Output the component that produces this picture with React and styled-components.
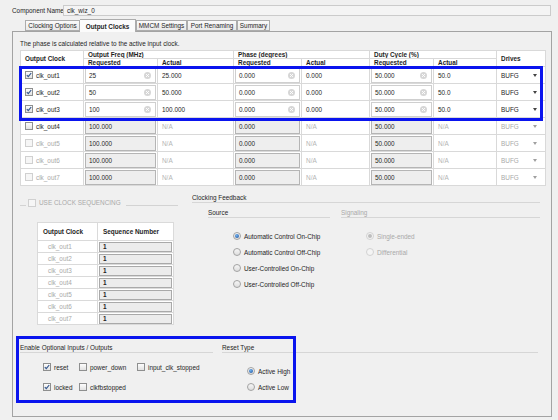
import React from "react";
import styled, { createGlobalStyle } from "styled-components";

const GlobalStyle = createGlobalStyle`
  html, body {
    margin: 0;
    padding: 0;
    background: #f0f0f0;
  }
  body {
    font-family: "Liberation Sans", Arial, sans-serif;
    font-size: 6.4px;
    color: #1e1e1e;
  }
`;

const BLUE = "#0a14ee";
const GRAY_TEXT = "#a9a9a9";

const clocks = [
  { name: "clk_out1", on: true, freq: "25", freqAct: "25.000" },
  { name: "clk_out2", on: true, freq: "50", freqAct: "50.000" },
  { name: "clk_out3", on: true, freq: "100", freqAct: "100.000" },
  { name: "clk_out4", on: false, can: true },
  { name: "clk_out5", on: false },
  { name: "clk_out6", on: false },
  { name: "clk_out7", on: false },
];

const tabs = [
  { label: "Clocking Options", w: 55 },
  { label: "Output Clocks", w: 56, active: true },
  { label: "MMCM Settings", w: 51 },
  { label: "Port Renaming", w: 50 },
  { label: "Summary", w: 33 },
];

// ---------- little widgets

const Box = styled.span`
  display: inline-flex;
  align-items: center;
  justify-content: center;
  flex: none;
  width: 8px;
  height: 8px;
  box-sizing: border-box;
  border: 1px solid ${(p) => (p.$disabled ? "#d0d0d0" : "#8e8f8f")};
  background: ${(p) =>
    p.$disabled ? "#f6f6f6" : "linear-gradient(#fdfdfd, #e2e2e2)"};
`;

const Check = ({ checked, disabled }) => (
  <Box $disabled={disabled}>
    {checked && (
      <svg width="6" height="6" viewBox="0 0 6 6">
        <path d="M0.8 3.1 L2.3 4.7 L5.2 1" fill="none" stroke="#35588f" strokeWidth="1.2" />
      </svg>
    )}
  </Box>
);

const RadioRing = styled.span`
  display: inline-flex;
  align-items: center;
  justify-content: center;
  flex: none;
  width: 8px;
  height: 8px;
  box-sizing: border-box;
  border-radius: 50%;
  border: 1px solid ${(p) => (p.$disabled ? "#d2d2d2" : "#a3a3a3")};
  background: ${(p) => (p.$disabled ? "#f4f4f4" : "linear-gradient(#f6f6f6, #dedede)")};
`;

const RadioDot = styled.span`
  width: 4px;
  height: 4px;
  border-radius: 50%;
  background: ${(p) => (p.$disabled ? "#bdbdbd" : "radial-gradient(circle at 40% 35%, #6fb0ec, #1a4f9c)")};
`;

const Radio = ({ checked, disabled }) => (
  <RadioRing $disabled={disabled}>{checked && <RadioDot $disabled={disabled} />}</RadioRing>
);

const ClearIcon = () => (
  <svg width="7" height="7" viewBox="0 0 7 7">
    <circle cx="3.5" cy="3.5" r="3.5" fill="#d6d6d6" />
    <path d="M2 2 L5 5 M5 2 L2 5" stroke="#fff" strokeWidth="0.9" />
  </svg>
);

const Arrow = ({ dim }) => (
  <svg width="4" height="3" viewBox="0 0 4 3">
    <path d="M0 0 H4 L2 3 Z" fill={dim ? "#a0a0a0" : "#444"} />
  </svg>
);

// ---------- top

const Page = styled.div`
  width: 558px;
  height: 420px;
  box-sizing: border-box;
  padding-top: 4px;
  overflow: hidden;
`;

const NameRow = styled.div`
  display: flex;
  align-items: center;
  height: 13px;
  padding: 0 7px 0 12px;
`;

const NameLabel = styled.span`
  width: 51px;
  flex: none;
  white-space: nowrap;
`;

const NameInput = styled.div`
  flex: 1;
  height: 11px;
  box-sizing: border-box;
  display: flex;
  align-items: center;
  padding-left: 3px;
  border: 1px solid #cbcbcb;
  background: #f4f4f4;
`;

const TabBar = styled.div`
  display: flex;
  align-items: flex-end;
  height: 12px;
  margin-top: 2px;
  padding-left: 25px;
  position: relative;
  z-index: 1;
`;

const Tab = styled.div`
  width: ${(p) => p.$w}px;
  height: ${(p) => (p.$active ? 13 : 11)}px;
  margin-bottom: ${(p) => (p.$active ? -1 : 0)}px;
  box-sizing: border-box;
  display: flex;
  align-items: center;
  justify-content: center;
  white-space: nowrap;
  border: 1px solid #acacac;
  border-bottom: ${(p) => (p.$active ? "none" : "1px solid #acacac")};
  border-left: ${(p) => (p.$first ? "none" : "1px solid #acacac")};
  background: ${(p) => (p.$active ? "#fbfbfb" : "linear-gradient(#fafafa, #e9e9e9)")};
  font-weight: ${(p) => (p.$active ? "bold" : "normal")};
`;

const Panel = styled.div`
  margin-left: 12px;
  width: 540px;
  height: 386px;
  box-sizing: border-box;
  border: 1px solid #a3a3a3;
  padding: 7px 0 0 7px;
`;

const Note = styled.div`
  height: 9px;
  line-height: 9px;
`;

// ---------- output clocks table

const TableWrap = styled.div`
  position: relative;
  width: 525px;
  margin-top: 2px;
`;

const Grid = styled.table`
  width: 525px;
  border-collapse: collapse;
  table-layout: fixed;
  background: #fff;
`;

const HeadCell = styled.th`
  height: 7px;
  line-height: 7px;
  padding: 0 0 0 4px;
  border: 1px solid #d9d9d9;
  text-align: left;
  font-weight: bold;
  white-space: nowrap;
  overflow: hidden;
`;

const Cell = styled.td`
  height: 16px;
  padding: 0;
  border: 1px solid #d9d9d9;
  white-space: nowrap;
`;

const ClockName = styled.div`
  display: flex;
  align-items: center;
  gap: 3px;
  padding-left: 4px;
  color: ${(p) => (p.$dim ? GRAY_TEXT : "inherit")};
`;

const EditBox = styled.div`
  height: 15px;
  margin: 0 1px;
  box-sizing: border-box;
  display: flex;
  align-items: center;
  justify-content: space-between;
  padding: 0 4px 0 3px;
  border: 1px solid ${(p) => (p.$locked ? "#b5b5b5" : "#cfcfcf")};
  background: ${(p) => (p.$locked ? "#eeeeee" : "#fff")};
`;

const Value = styled.div`
  padding-left: 4px;
  color: ${(p) => (p.$dim ? "#b4b4b4" : "inherit")};
`;

const DriveBox = styled.div`
  display: flex;
  align-items: center;
  justify-content: space-between;
  padding: 0 8px 0 4px;
  color: ${(p) => (p.$dim ? GRAY_TEXT : "inherit")};
`;

const Highlight = styled.div`
  position: absolute;
  left: ${(p) => p.$x}px;
  top: ${(p) => p.$y}px;
  width: ${(p) => p.$w}px;
  height: ${(p) => p.$h}px;
  box-sizing: border-box;
  border: 3px solid ${BLUE};
  pointer-events: none;
`;

const Requested = ({ value, on }) => (
  <EditBox $locked={!on}>
    <span>{value}</span>
    {on && <ClearIcon />}
  </EditBox>
);

// ---------- sequencing + feedback

const Middle = styled.div`
  display: flex;
  gap: 12px;
  margin-top: 8px;
`;

const SeqColumn = styled.div`
  width: 160px;
`;

const Legend = styled.div`
  display: flex;
  align-items: center;
  height: 9px;
  margin-top: 4px;
  color: ${GRAY_TEXT};
  white-space: nowrap;
`;

const LegendLine = styled.span`
  align-self: flex-end;
  height: 1px;
  width: ${(p) => (p.$w ? `${p.$w}px` : "auto")};
  flex: ${(p) => (p.$w ? "none" : 1)};
  margin: 0 2px 1px ${(p) => (p.$w ? 0 : 5)}px;
  background: #d3d3d3;
`;

const LegendText = styled.span`
  margin-left: 3px;
`;

const SeqTable = styled.table`
  width: 136px;
  margin: 15px 0 0 17px;
  border-collapse: collapse;
  table-layout: fixed;
  background: #fff;
`;

const SeqHead = styled.th`
  height: 17px;
  padding: 0 0 0 5px;
  border: 1px solid #dadada;
  text-align: left;
  font-weight: bold;
  white-space: nowrap;
`;

const SeqCell = styled.td`
  height: 11px;
  padding: 0;
  border: 1px solid #dadada;
  color: ${GRAY_TEXT};
`;

const SeqName = styled.div`
  padding-left: 10px;
`;

const SeqBox = styled.div`
  height: 10px;
  margin: 0 1px;
  box-sizing: border-box;
  display: flex;
  align-items: center;
  padding-left: 3px;
  border: 1px solid #a9a9a9;
  background: #ececec;
  color: #222;
  font-weight: bold;
`;

const FeedbackColumn = styled.div`
  width: 348px;
`;

const Title = styled.div`
  height: 8px;
  line-height: 8px;
  border-bottom: 1px solid #d6d6d6;
  color: ${(p) => (p.$dim ? GRAY_TEXT : "inherit")};
  white-space: nowrap;
`;

const SubGroups = styled.div`
  display: flex;
  gap: 11px;
  margin: 6px 0 0 16px;
`;

const Group = styled.div`
  width: ${(p) => (p.$w ? `${p.$w}px` : "auto")};
  flex: ${(p) => (p.$w ? "none" : 1)};
`;

const RadioList = styled.div`
  display: flex;
  flex-direction: column;
  margin-top: ${(p) => p.$top}px;
  padding-left: 25px;
`;

const Option = styled.label`
  display: flex;
  align-items: center;
  gap: 3px;
  height: ${(p) => p.$h}px;
  white-space: nowrap;
  color: ${(p) => (p.$dim ? GRAY_TEXT : "inherit")};
`;

// ---------- optional inputs / reset type

const Bottom = styled.div`
  position: relative;
  display: flex;
  gap: 9px;
  width: 518px;
  margin-top: 19px;
`;

const PortGrid = styled.div`
  display: grid;
  grid-template-columns: 36px 58px auto;
  grid-auto-rows: 20px;
  margin-top: 4px;
  padding-left: 23px;
`;

export default function App() {
  return (
    <>
      <GlobalStyle />
      <Page>
        <NameRow>
          <NameLabel>Component Name</NameLabel>
          <NameInput>clk_wiz_0</NameInput>
        </NameRow>

        <TabBar>
          {tabs.map((t, i) => (
            <Tab key={t.label} $w={t.w} $active={t.active} $first={i === 1}>
              {t.label}
            </Tab>
          ))}
        </TabBar>

        <Panel>
          <Note>The phase is calculated relative to the active input clock.</Note>

          <TableWrap>
            <Grid>
              <colgroup>
                <col style={{ width: 63 }} />
                <col style={{ width: 74 }} />
                <col style={{ width: 76 }} />
                <col style={{ width: 68 }} />
                <col style={{ width: 68 }} />
                <col style={{ width: 64 }} />
                <col style={{ width: 63 }} />
                <col style={{ width: 49 }} />
              </colgroup>
              <thead>
                <tr>
                  <HeadCell rowSpan={2}>Output Clock</HeadCell>
                  <HeadCell colSpan={2}>Output Freq (MHz)</HeadCell>
                  <HeadCell colSpan={2}>Phase (degrees)</HeadCell>
                  <HeadCell colSpan={2}>Duty Cycle (%)</HeadCell>
                  <HeadCell rowSpan={2}>Drives</HeadCell>
                </tr>
                <tr>
                  <HeadCell>Requested</HeadCell>
                  <HeadCell>Actual</HeadCell>
                  <HeadCell>Requested</HeadCell>
                  <HeadCell>Actual</HeadCell>
                  <HeadCell>Requested</HeadCell>
                  <HeadCell>Actual</HeadCell>
                </tr>
              </thead>
              <tbody>
                {clocks.map((c) => (
                  <tr key={c.name}>
                    <Cell>
                      <ClockName $dim={!c.on && !c.can}>
                        <Check checked={c.on} disabled={!c.on && !c.can} />
                        {c.name}
                      </ClockName>
                    </Cell>
                    <Cell>
                      <Requested on={c.on} value={c.on ? c.freq : "100.000"} />
                    </Cell>
                    <Cell>
                      <Value $dim={!c.on}>{c.on ? c.freqAct : "N/A"}</Value>
                    </Cell>
                    <Cell>
                      <Requested on={c.on} value="0.000" />
                    </Cell>
                    <Cell>
                      <Value $dim={!c.on}>{c.on ? "0.000" : "N/A"}</Value>
                    </Cell>
                    <Cell>
                      <Requested on={c.on} value="50.000" />
                    </Cell>
                    <Cell>
                      <Value $dim={!c.on}>{c.on ? "50.0" : "N/A"}</Value>
                    </Cell>
                    <Cell>
                      <DriveBox $dim={!c.on}>
                        BUFG
                        <Arrow dim={!c.on} />
                      </DriveBox>
                    </Cell>
                  </tr>
                ))}
              </tbody>
            </Grid>
            <Highlight $x={-1} $y={16} $w={524} $h={55} />
          </TableWrap>

          <Middle>
            <SeqColumn>
              <Legend>
                <LegendLine $w={6} />
                <Check disabled />
                <LegendText>USE CLOCK SEQUENCING</LegendText>
                <LegendLine />
              </Legend>
              <SeqTable>
                <colgroup>
                  <col style={{ width: 60 }} />
                  <col style={{ width: 76 }} />
                </colgroup>
                <thead>
                  <tr>
                    <SeqHead>Output Clock</SeqHead>
                    <SeqHead>Sequence Number</SeqHead>
                  </tr>
                </thead>
                <tbody>
                  {clocks.map((c) => (
                    <tr key={c.name}>
                      <SeqCell>
                        <SeqName>{c.name}</SeqName>
                      </SeqCell>
                      <SeqCell>
                        <SeqBox>1</SeqBox>
                      </SeqCell>
                    </tr>
                  ))}
                </tbody>
              </SeqTable>
            </SeqColumn>

            <FeedbackColumn>
              <Title>Clocking Feedback</Title>
              <SubGroups>
                <Group $w={122}>
                  <Title>Source</Title>
                  <RadioList $top={10}>
                    <Option $h={16}>
                      <Radio checked />
                      Automatic Control On-Chip
                    </Option>
                    <Option $h={16}>
                      <Radio />
                      Automatic Control Off-Chip
                    </Option>
                    <Option $h={16}>
                      <Radio />
                      User-Controlled On-Chip
                    </Option>
                    <Option $h={16}>
                      <Radio />
                      User-Controlled Off-Chip
                    </Option>
                  </RadioList>
                </Group>
                <Group>
                  <Title $dim>Signaling</Title>
                  <RadioList $top={10}>
                    <Option $h={16} $dim>
                      <Radio checked disabled />
                      Single-ended
                    </Option>
                    <Option $h={16} $dim>
                      <Radio disabled />
                      Differential
                    </Option>
                  </RadioList>
                </Group>
              </SubGroups>
            </FeedbackColumn>
          </Middle>

          <Bottom>
            <Group $w={193}>
              <Title>Enable Optional Inputs / Outputs</Title>
              <PortGrid>
                <Option $h={20}>
                  <Check checked />
                  reset
                </Option>
                <Option $h={20}>
                  <Check />
                  power_down
                </Option>
                <Option $h={20}>
                  <Check />
                  input_clk_stopped
                </Option>
                <Option $h={20}>
                  <Check checked />
                  locked
                </Option>
                <Option $h={20}>
                  <Check />
                  clkfbstopped
                </Option>
              </PortGrid>
            </Group>
            <Group>
              <Title>Reset Type</Title>
              <RadioList $top={10}>
                <Option $h={16}>
                  <Radio checked />
                  Active High
                </Option>
                <Option $h={16}>
                  <Radio />
                  Active Low
                </Option>
              </RadioList>
            </Group>
            <Highlight $x={-4} $y={-8} $w={280} $h={67} />
          </Bottom>
        </Panel>
      </Page>
    </>
  );
}
